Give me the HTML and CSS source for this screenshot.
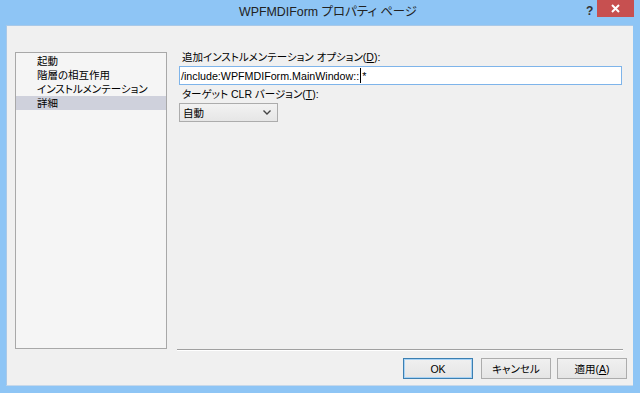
FILE: index.html
```html
<!DOCTYPE html>
<html lang="ja">
<head>
<meta charset="utf-8">
<link rel="stylesheet" href="styles.css">
</head>
<body>
<div class="window">
  <div class="titlebar">
    <div class="title">WPFMDIForm プロパティ ページ</div>
    <div class="help">?</div>
    <div class="close">
      <svg width="9" height="9" viewBox="0 0 9 9"><path d="M1 1 L8 8 M8 1 L1 8" stroke="#fff" stroke-width="2"/></svg>
    </div>
  </div>
  <div class="client">
    <div class="main">
      <div class="list">
        <div class="item">起動</div>
        <div class="item">階層の相互作用</div>
        <div class="item">インストルメンテーション</div>
        <div class="item selected">詳細</div>
      </div>
      <div class="pane">
        <div class="label">追加インストルメンテーション オプション(<u>D</u>):</div>
        <div class="input">/include:WPFMDIForm.MainWindow::<span class="caret"></span>*</div>
        <div class="label">ターゲット CLR バージョン(<u>T</u>):</div>
        <div class="select">
          <span class="seltext">自動</span>
          <svg class="chev" width="8" height="5" viewBox="0 0 8 5"><path d="M0.5 0.5 L4 4 L7.5 0.5" fill="none" stroke="#444" stroke-width="1.4"/></svg>
        </div>
        <div class="spacer"></div>
        <div class="separator"></div>
      </div>
    </div>
    <div class="buttons">
      <div class="btn default">OK</div>
      <div class="btn cancel">キャンセル</div>
      <div class="btn apply">適用(<u>A</u>)</div>
    </div>
  </div>
</div>
</body>
</html>
```

FILE: styles.css
```css
html, body {
  margin: 0;
  padding: 0;
}
body {
  width: 640px;
  height: 393px;
  overflow: hidden;
  font-family: "Liberation Sans", "Noto Sans CJK JP", sans-serif;
  font-feature-settings: "palt";
  color: #000;
}
.window {
  width: 640px;
  height: 393px;
  background: #8ec5f5;
  display: flex;
  flex-direction: column;
  box-sizing: border-box;
  padding: 0 7px 7px 6px;
}
.titlebar {
  height: 25px;
  display: flex;
  align-items: flex-start;
  position: relative;
  flex: none;
}
.title {
  position: absolute;
  left: 233px;
  top: 5px;
  font-size: 12.4px;
  color: #222;
  line-height: 15px;
  white-space: nowrap;
}
.help {
  position: absolute;
  left: 580px;
  top: 4px;
  font-size: 12px;
  font-weight: bold;
  color: #333;
}
.close {
  position: absolute;
  left: 591px;
  top: 0;
  width: 37px;
  height: 17px;
  background: #c75050;
  display: flex;
  align-items: center;
  justify-content: center;
}
.client {
  flex: 1;
  background: #f0f0f0;
  border-left: 1px solid #a9c9e8;
  border-top: 1px solid #a9c9e8;
  border-bottom: 1px solid #c6d8ea;
  box-sizing: border-box;
  display: flex;
  flex-direction: column;
}
.main {
  display: flex;
  padding: 24px 0 0 8px;
}
.list {
  width: 152px;
  height: 297px;
  margin-top: 2px;
  box-sizing: border-box;
  border: 1px solid #a8a8a8;
  background: #f5f5f5;
  padding-top: 1px;
  padding-left: 0;
  font-size: 10.5px;
}
.item {
  height: 14px;
  line-height: 14px;
  padding-left: 21px;
  white-space: nowrap;
}
.item.selected {
  background: #cfd1dc;
}
.pane {
  margin-left: 10px;
  width: 446px;
  height: 301px;
  display: flex;
  flex-direction: column;
}
.label {
  font-size: 10.5px;
  line-height: 14px;
  height: 14px;
  margin-left: 5px;
  white-space: nowrap;
}
.label u, .btn u {
  text-decoration-thickness: 1px;
  text-underline-offset: 1px;
}
.input {
  margin: 2px 0 2px 2px;
  width: 443px;
  height: 19px;
  box-sizing: border-box;
  border: 1px solid #7eb4ea;
  background: #fff;
  font-size: 10.7px;
  line-height: 16px;
  padding-left: 1px;
  white-space: nowrap;
  display: flex;
  align-items: center;
}
.caret {
  display: inline-block;
  width: 1px;
  height: 15px;
  background: #000;
  margin: 0 1px 0 1px;
}
.select {
  margin: 2px 0 0 2px;
  width: 99px;
  height: 19px;
  box-sizing: border-box;
  border: 1px solid #acacac;
  background: linear-gradient(#f2f2f2, #e6e6e6);
  display: flex;
  align-items: center;
  padding-left: 3px;
  font-size: 10.5px;
}
.seltext {
  flex: 1;
}
.chev {
  margin-right: 6px;
}
.spacer {
  flex: 1;
}
.separator {
  height: 1px;
  background: #a0a0a0;
  border-bottom: 1px solid #fff;
}
.buttons {
  display: flex;
  justify-content: flex-end;
  padding: 7px 6px 0 0;
  gap: 8px;
}
.btn {
  width: 70px;
  height: 21px;
  box-sizing: border-box;
  border: 1px solid #acacac;
  background: linear-gradient(#f0f0f0, #e5e5e5);
  font-size: 10.5px;
  display: flex;
  align-items: center;
  justify-content: center;
}
.btn.default {
  border-color: #3c7fb1;
  box-shadow: inset 0 0 0 1px #a8d3f5;
}
.btn.apply {
  margin-left: -2px;
}
```
